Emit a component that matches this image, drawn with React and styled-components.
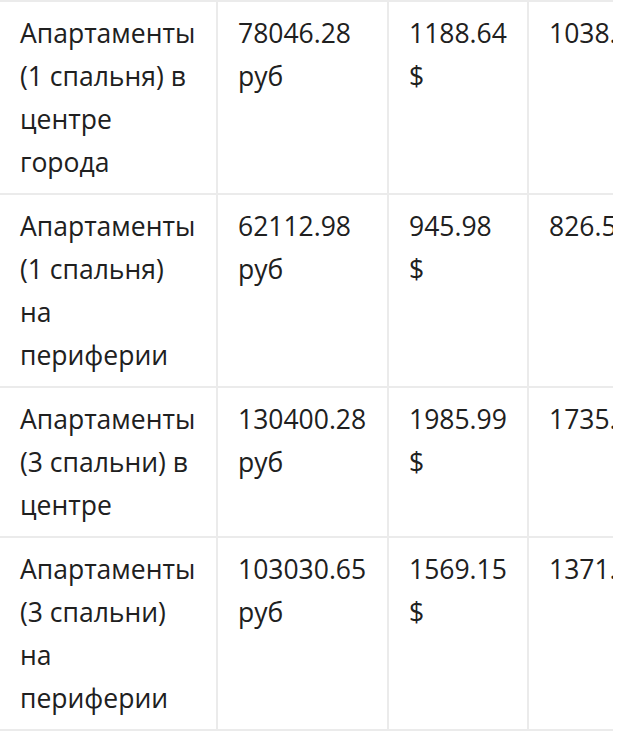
import styled, { createGlobalStyle } from "styled-components";

const GlobalStyle = createGlobalStyle`
    body {
        margin: 0;
        background: #ffffff;
        font-family: "Open Sans", "Noto Sans", sans-serif;
    }
`

const TableWrap = styled.div`
    width: 613px;
    overflow: hidden;
`

const PriceTable = styled.table`
    width: 690px;
    table-layout: fixed;
    border-collapse: collapse;
    color: #202020;
    font-size: 26.5px;
    line-height: 43px;
`

const Col = styled.col`
    width: ${({$width}) => $width}px;
`

const Cell = styled.td`
    vertical-align: top;
    padding: 10px 18px 9px 20px;
    border: 2px solid #ebebeb;
    word-wrap: break-word;
    &:first-child {
        border-left: none;
    }
`

const colWidths = [217, 171, 140, 162]

const rows = [
    ["Апартаменты (1 спальня) в центре города", "78046.28 руб", "1188.64 $", "1038.21 €"],
    ["Апартаменты (1 спальня) на периферии", "62112.98 руб", "945.98 $", "826.57 €"],
    ["Апартаменты (3 спальни) в центре", "130400.28 руб", "1985.99 $", "1735.29 €"],
    ["Апартаменты (3 спальни) на периферии", "103030.65 руб", "1569.15 $", "1371.06 €"],
]

export default function App() {
    return (
        <>
            <GlobalStyle />
            <TableWrap>
                <PriceTable>
                    <colgroup>
                        {colWidths.map((w, i) => <Col key={i} $width={w} />)}
                    </colgroup>
                    <tbody>
                        {rows.map((row, i) => (
                            <tr key={i}>
                                {row.map((text, j) => (
                                    <Cell key={j}>{text}</Cell>
                                ))}
                            </tr>
                        ))}
                    </tbody>
                </PriceTable>
            </TableWrap>
        </>
    )
}
